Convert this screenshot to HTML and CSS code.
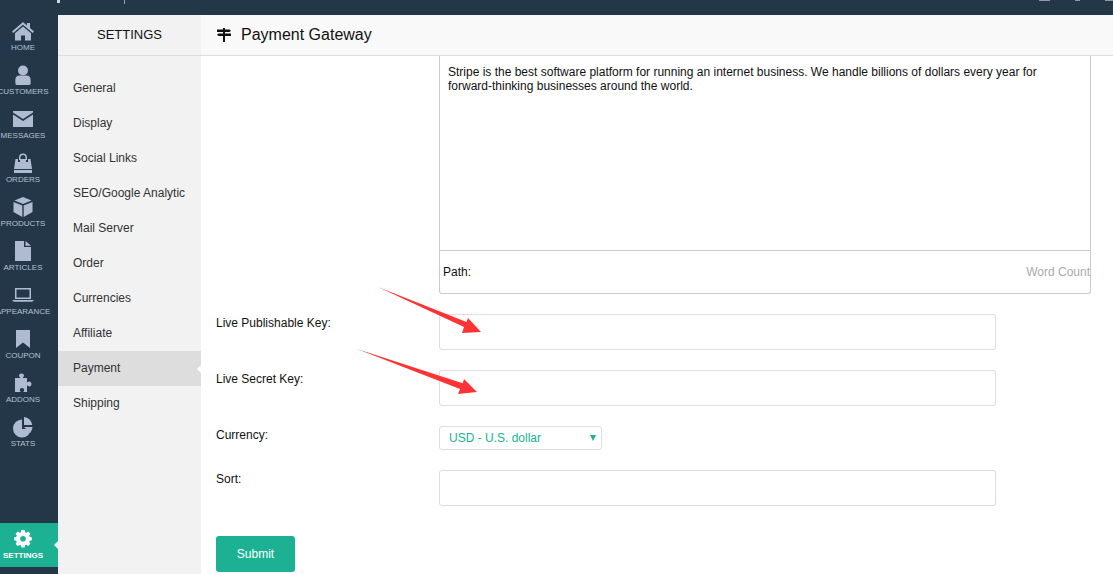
FILE: index.html
```html
<!DOCTYPE html>
<html lang="en">
<head>
<meta charset="utf-8">
<title>Payment Gateway</title>
<link rel="stylesheet" href="styles.css">
</head>
<body>
<header class="topbar">
  <span class="top-y"></span>
  <span class="top-sep"></span>
  <span class="top-right">
    <span class="top-bit top-bit-a"></span>
    <span class="top-bit top-bit-b"></span>
    <span class="top-bit top-bit-c"></span>
  </span>
</header>
<div class="app">
  <nav class="rail">
    <a class="rail-item"><svg class="rail-icon" viewBox="0 0 24 20"><path d="M12 1 1 10.500l1.300 1.500L12 3.800 21.700 12l1.300-1.500L19 7V2h-3v2.400z"/><path d="M12 5.500 4 12.300V19.500h6v-5h4v5h6v-7.200z"/></svg><span>HOME</span></a>
    <a class="rail-item"><svg class="rail-icon" viewBox="0 0 24 20"><circle cx="12" cy="5.500" r="5"/><path d="M5 20q-1.500 0-1.500-2v-3q0-4.500 4.500-4.500h8q4.500 0 4.500 4.500v3q0 2-1.500 2z" transform="translate(1.200 0) scale(.9 1)"/></svg><span>CUSTOMERS</span></a>
    <a class="rail-item"><svg class="rail-icon" viewBox="0 0 24 20"><path d="M2 2h20v1.500L12 10 2 3.500z"/><path d="M2 5.500 12 12l10-6.500V18H2z"/></svg><span>MESSAGES</span></a>
    <a class="rail-item"><svg class="rail-icon" viewBox="0 0 24 20"><path d="M8 7V4.500a4 4 0 0 1 8 0V7h-1.500V4.500a2.500 2.500 0 0 0-5 0V7z"/><path d="M4.500 6H7v3h2V6h6v3h2V6h2.500L21 16H3z"/><path d="M3 17h18v3H3z"/></svg><span>ORDERS</span></a>
    <a class="rail-item"><svg class="rail-icon" viewBox="0 0 24 20"><path d="M12 0 3.500 3.500 12 7l8.500-3.500z"/><path d="M2.500 5v10l8.800 5V8.500z"/><path d="M21.500 5v10l-8.800 5V8.500z"/></svg><span>PRODUCTS</span></a>
    <a class="rail-item"><svg class="rail-icon" viewBox="0 0 24 20"><path d="M4 0h9v6h7v14H4z"/><path d="M14.500 0 20 4.800h-5.500z"/></svg><span>ARTICLES</span></a>
    <a class="rail-item"><svg class="rail-icon" viewBox="0 0 24 20"><path fill-rule="evenodd" d="M4 3h16v11H4zM5.500 4.500v8h13v-8z"/><path d="M1.500 15h21v.8l-1.500 1H3l-1.500-1z"/></svg><span>APPEARANCE</span></a>
    <a class="rail-item"><svg class="rail-icon" viewBox="0 0 24 20"><path d="M5 1h14v18l-7-5.500L5 19z"/></svg><span>COUPON</span></a>
    <a class="rail-item"><svg class="rail-icon" viewBox="0 0 24 20"><path d="M4 5h5.500Q8 3.800 8 2.600 8 .5 10.500.5t2.500 2.100q0 1.200-1.500 2.400H16v4.500q1-1.100 2.300-1.100 2.200 0 2.200 2.500t-2.200 2.500q-1.300 0-2.300-1.100V19h-3.800q1-1 1-2.200 0-1.800-2.200-1.800t-2.200 1.800q0 1.200 1 2.200H4z"/></svg><span>ADDONS</span></a>
    <a class="rail-item"><svg class="rail-icon" viewBox="0 0 24 20"><path d="M11 2.500A9 9 0 1 0 20 12h-9z"/><path d="M13 0a9 9 0 0 1 8.200 8H13z"/><path d="M13 10h8.500a9 9 0 0 1-2.500 6z"/></svg><span>STATS</span></a>
    <a class="rail-item rail-item-active"><svg class="rail-icon" viewBox="0 0 24 20"><path fill-rule="evenodd" d="M10 0h4l.5 2.700 1.700.7 2.300-1.500 2.800 2.800-1.500 2.300.7 1.700L23 9.200v3.600l-2.500.5-.7 1.700 1.500 2.300-2.800 2.700-2.300-1.500-1.700.7L14 22h-4l-.5-2.700-1.700-.7-2.300 1.500-2.800-2.700 1.500-2.300-.7-1.700L1 12.800V9.200l2.500-.5.700-1.700L2.700 4.700l2.800-2.800 2.300 1.500 1.700-.7zM12 7.500a3.500 3.500 0 1 0 0 7 3.500 3.500 0 0 0 0-7z" transform="translate(2.400 1) scale(.8 .8)"/></svg><span>SETTINGS</span></a>
  </nav>
  <aside class="side">
    <h2 class="side-title">SETTINGS</h2>
    <ul class="side-menu">
      <li class="side-link">General</li>
      <li class="side-link">Display</li>
      <li class="side-link">Social Links</li>
      <li class="side-link">SEO/Google Analytic</li>
      <li class="side-link">Mail Server</li>
      <li class="side-link">Order</li>
      <li class="side-link">Currencies</li>
      <li class="side-link">Affiliate</li>
      <li class="side-link side-link-active">Payment</li>
      <li class="side-link">Shipping</li>
    </ul>
  </aside>
  <main class="main">
    <div class="main-head">
      <svg class="head-icon" viewBox="0 0 14 14"><path d="M0 1.500h12.500L14 2.700l-1.500 1.300H0zM1.500 5.500H14V8H1.500L0 6.800zM6 0h2v1.500H6zM6 4h2v1.500H6zM6 8h2v6H6z"/></svg>
      <h1 class="main-title">Payment Gateway</h1>
    </div>
    <form class="form">
      <div class="row row-editor">
        <span class="label"></span>
        <div class="editor">
          <div class="editor-body">Stripe is the best software platform for running an internet business. We handle billions of dollars every year for forward-thinking businesses around the world.</div>
          <div class="editor-foot"><span>Path:</span><span class="word-count">Word Count</span></div>
        </div>
      </div>
      <div class="row row-input"><label class="label">Live Publishable Key:</label><input class="input" type="text"></div>
      <div class="row row-input"><label class="label">Live Secret Key:</label><input class="input" type="text"></div>
      <div class="row row-select"><label class="label">Currency:</label>
        <div class="select"><span>USD - U.S. dollar</span><span class="caret"></span></div>
      </div>
      <div class="row row-input"><label class="label">Sort:</label><input class="input" type="text"></div>
      <button class="submit" type="button">Submit</button>
    </form>
    <svg class="arrows" viewBox="0 0 912 559">
      <path d="M177 272 L265.500 307 L267 303 L280 317 L261 318 L263 312 Z"/>
      <path d="M156 334 L261.700 368.300 L263 364 L276 377 L257 379 L259 374 Z"/>
    </svg>
  </main>
</div>
</body>
</html>
```

FILE: styles.css
```css
* { box-sizing: border-box; }
html, body { margin: 0; height: 574px; overflow: hidden; }
body { font-family: "Liberation Sans", Arial, sans-serif; color: #222; background: #fff; }

.topbar { position: relative; height: 15px; background: #243748; }
.top-y { position: absolute; left: 57px; top: 0; width: 3px; height: 3px; background: #cfd6dc; }
.top-sep { position: absolute; left: 124px; top: 0; width: 1px; height: 4px; background: #9aa6b0; }
.top-right { position: absolute; right: 0; top: 0; }
.top-bit { position: absolute; top: 0; height: 1px; background: #8c9aa8; }
.top-bit-a { right: 63px; width: 11px; }
.top-bit-b { right: 33px; width: 5px; }
.top-bit-c { right: 0; width: 8px; }

.app { display: flex; height: 559px; }

.rail { width: 58px; flex: none; display: flex; flex-direction: column; background: #243748; padding-bottom: 7px; }
.rail-item { height: 44px; flex: none; display: flex; flex-direction: column; align-items: center; width: 58px; padding: 6px 12px 0 0; color: #b4c0d4; font-size: 8px; line-height: 11px; white-space: nowrap; }
.rail-item span { display: block; margin-top: 1px; }
.rail-icon { width: 24px; height: 20px; flex: none; fill: #aebbd0; overflow: visible; }
.rail-item-active { position: relative; margin-top: auto; background: #1bb192; color: #fff; font-weight: bold; }
.rail-item-active .rail-icon { fill: #fff; }
.rail-item-active::after { content: ""; position: absolute; right: 0; top: 18px; border: 4px solid transparent; border-right-color: #f2f2f2; border-left-width: 0; }

.side { width: 143px; flex: none; background: #f2f2f2; }
.side-title { margin: 0; height: 41px; border-bottom: 1px solid #ddd; font-size: 13px; font-weight: normal; line-height: 40px; text-align: center; color: #111; }
.side-menu { list-style: none; margin: 0; padding: 15px 0 0; }
.side-link { position: relative; height: 35px; padding-left: 15px; font-size: 12px; line-height: 35px; color: #333; }
.side-link-active { background: #ddd; }
.side-link-active::after { content: ""; position: absolute; right: 0; top: 14px; border: 4px solid transparent; border-right-color: #fff; border-left-width: 0; }

.main { position: relative; flex: 1; min-width: 0; overflow: hidden; }
.main-head { height: 41px; display: flex; align-items: center; gap: 10px; padding: 0 0 0 16px; background: #f9f9f9; border-bottom: 1px solid #ddd; }
.head-icon { width: 14px; height: 14px; flex: none; fill: #111; }
.main-title { margin: 0; font-size: 16px; font-weight: normal; color: #111; }

.form { padding-left: 15px; }
.row { display: flex; }
.label { width: 223px; flex: none; font-size: 12px; line-height: 14px; color: #111; }
.row-input { height: 36px; margin-top: 20px; }
.row-input .label { padding-top: 2px; }
.input { width: 557px; height: 36px; padding: 0 8px; border: 1px solid #ddd; border-radius: 3px; background: #fff; outline: none; }
.row-select { height: 24px; margin-top: 20px; }
.row-select .label { padding-top: 2px; }

.editor { width: 652px; height: 238px; display: flex; flex-direction: column; border: 1px solid #ccc; border-top: 0; border-radius: 0 0 3px 3px; }
.editor-body { height: 195px; padding: 9px 8px 0; border-bottom: 1px solid #ccc; font-size: 12px; line-height: 14px; color: #111; }
.editor-foot { flex: 1; display: flex; justify-content: space-between; align-items: center; padding: 0 0 0 3px; font-size: 12px; color: #111; }
.word-count { color: #aaa; }

.select { width: 163px; height: 24px; display: flex; align-items: center; justify-content: space-between; padding: 0 5px 0 9px; border: 1px solid #ddd; border-radius: 3px; background: #fff; font-size: 12px; color: #1bb192; }
.caret { width: 0; height: 0; border: 3px solid transparent; border-top: 6px solid #1bb192; border-bottom: 0; }

.submit { display: block; width: 79px; height: 36px; margin-top: 30px; border: 0; border-radius: 3px; background: #1bb192; color: #fff; font: 12px "Liberation Sans", Arial, sans-serif; }

.arrows { position: absolute; left: 0; top: 0; width: 912px; height: 559px; fill: #f33; pointer-events: none; }
```
